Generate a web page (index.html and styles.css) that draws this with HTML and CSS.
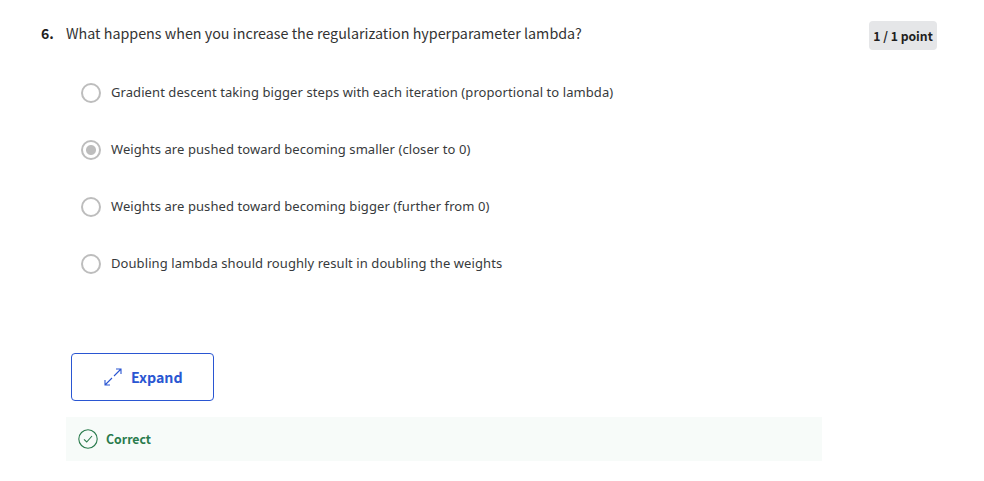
FILE: index.html
```
<!DOCTYPE html>
<html lang="en">
<head>
<meta charset="utf-8">
<title>Quiz question</title>
<link rel="stylesheet" href="styles.css">
</head>
<body>
<main class="question">
  <header class="head">
    <span class="number">6.</span>
    <h1 class="prompt">What happens when you increase the regularization hyperparameter lambda?</h1>
    <span class="points">1 / 1 point</span>
  </header>
  <ul class="options">
    <li class="option"><span class="radio"></span><span class="label">Gradient descent taking bigger steps with each iteration (proportional to lambda)</span></li>
    <li class="option"><span class="radio checked"></span><span class="label">Weights are pushed toward becoming smaller (closer to 0)</span></li>
    <li class="option"><span class="radio"></span><span class="label">Weights are pushed toward becoming bigger (further from 0)</span></li>
    <li class="option"><span class="radio"></span><span class="label">Doubling lambda should roughly result in doubling the weights</span></li>
  </ul>
  <button class="expand" type="button">
    <svg width="20" height="20" viewBox="0 0 20 20" fill="none" stroke="currentColor" stroke-width="1.1"><path d="M13 2h5v5M18 2l-7 7M9 11l-7 7M2 13v5h5"/></svg>
    <span class="caption">Expand</span>
  </button>
  <section class="feedback">
    <svg width="20" height="20" viewBox="0 0 20 20" fill="none" stroke="currentColor" stroke-width="1.1"><circle cx="10" cy="10" r="9.200"/><path d="M6 10.300l2.700 2.700L14 7"/></svg>
    <span class="caption">Correct</span>
  </section>
</main>
</body>
</html>
```
FILE: styles.css
```
* { box-sizing: border-box; }
body { margin: 0; background: #fff; color: #1f1f1f; font-family: "Noto Sans CJK SC", sans-serif; }
.question { padding: 21px 47px 0 41px; }
.head { display: flex; height: 29px; }
.number { width: 25px; font-size: 14px; font-weight: 700; line-height: 25px; }
.prompt { flex: 1; margin: 0; color: #333; font-size: 14.32px; font-weight: 400; line-height: 23px; white-space: nowrap; }
.points { width: 68px; height: 29px; border-radius: 4px; background: #e5e6e8; font-size: 12.2px; font-weight: 700; line-height: 30px; text-align: center; white-space: nowrap; }
.options { list-style: none; margin: 33px 0 0 40px; padding: 0; }
.option { display: flex; align-items: center; gap: 10px; height: 20px; margin-bottom: 37px; color: #373a3c; font-family: "Noto Sans", sans-serif; font-size: 13px; line-height: 20px; letter-spacing: 0.078px; white-space: nowrap; }
.label { margin-top: -2px; }
.radio { width: 20px; height: 20px; border: 2px solid #bdbdbd; border-radius: 50%; }
.checked { background: radial-gradient(circle, #bdbdbd 0 4.500px, transparent 5.500px); }
.expand { display: flex; align-items: center; gap: 8px; width: 143px; height: 48px; margin: 79px 0 0 30px; padding: 0 0 0 31px; border: 1px solid #2a56d2; border-radius: 4px; background: #fff; color: #2a56d2; font: 700 14.2px "Noto Sans CJK SC", sans-serif; }
.feedback { display: flex; align-items: center; gap: 8px; width: 756px; height: 44px; margin: 16px 0 0 25px; padding-left: 12px; background: #f7fbf9; color: #2a7b4d; font-size: 12.3px; font-weight: 700; }
.caption { line-height: 20px; }
```
